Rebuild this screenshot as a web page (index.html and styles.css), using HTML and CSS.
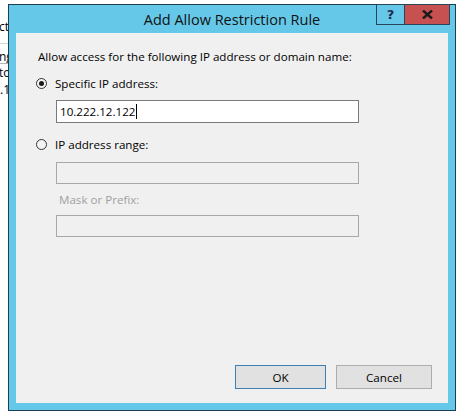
FILE: index.html
```html
<!DOCTYPE html>
<html>
<head>
<meta charset="utf-8">
<link rel="stylesheet" href="styles.css">
</head>
<body>
<div class="desktop">
  <div class="backdrop-left">
    <div class="bg-row bg-ct">ct</div>
    <div class="bg-row bg-ng">ng</div>
    <div class="bg-row bg-to">to</div>
    <div class="bg-row bg-dot">.1</div>
  </div>
  <div class="backdrop-right">
    <div class="bg-row bg-ric">ric</div>
  </div>

  <div class="dialog">
    <div class="titlebar">
      <span class="title">Add Allow Restriction Rule</span>
    </div>
    <div class="caption-buttons">
      <span class="cap-btn help">?</span>
      <span class="cap-btn close">
        <svg width="11" height="9" viewBox="0 0 11 9"><path d="M1 0.5 L10 8.5 M10 0.5 L1 8.5" stroke="#1b1b1b" stroke-width="2.4"/></svg>
      </span>
    </div>
    <div class="client">
      <div class="prompt">Allow access for the following IP address or domain name:</div>
      <label class="radio-row first">
        <span class="radio checked"></span>
        <span class="radio-label">Specific IP address:</span>
      </label>
      <div class="textbox"><span class="value">10.222.12.122</span><span class="caret"></span></div>
      <label class="radio-row second">
        <span class="radio"></span>
        <span class="radio-label">IP address range:</span>
      </label>
      <div class="textbox disabled"></div>
      <div class="sub-label">Mask or Prefix:</div>
      <div class="textbox disabled"></div>
      <div class="buttons">
        <span class="btn default">OK</span>
        <span class="btn cancel">Cancel</span>
      </div>
    </div>
  </div>
</div>
</body>
</html>
```

FILE: styles.css
```css
html, body {
  margin: 0;
  padding: 0;
  background: #ffffff;
}

body {
  font-family: "Open Sans", "Noto Sans", "DejaVu Sans", sans-serif;
  font-size: 11.6px;
  color: #000;
}

.desktop {
  position: relative;
  width: 465px;
  height: 420px;
  overflow: hidden;
}

.backdrop-left {
  position: absolute;
  left: 0;
  top: 0;
  width: 9px;
}

.backdrop-right {
  position: absolute;
  left: 456px;
  top: 0;
  width: 9px;
  overflow: hidden;
}

.bg-row {
  position: absolute;
  left: 0;
  font-size: 12px;
  line-height: 14px;
  white-space: nowrap;
  color: #000;
}

.bg-ct { top: 20px; left: -1px; }
.bg-ng { top: 50px; left: -1px; }
.bg-to { top: 66px; left: -1px; }
.bg-dot { top: 83px; left: 0; }
.bg-ric { top: 23px; left: 1px; font-size: 11px; }

.backdrop-left::before {
  content: "";
  position: absolute;
  left: 0;
  top: 43px;
  width: 9px;
  border-top: 1px solid #d6d6d6;
}
.backdrop-left::after {
  content: "";
  position: absolute;
  left: 0;
  top: 63px;
  width: 9px;
  border-top: 1px solid #b4b4b4;
}
.backdrop-right::before {
  content: "";
  position: absolute;
  left: 0;
  top: 44px;
  width: 9px;
  border-top: 1px solid #dcdcdc;
}
.backdrop-right::after {
  content: "";
  position: absolute;
  left: 0;
  top: 86px;
  width: 9px;
  border-top: 1px solid #dcdcdc;
}

.dialog {
  position: absolute;
  left: 8px;
  top: 4px;
  width: 432px;
  border: 1px solid #1e3f52;
  background: #66c8e8;
  padding: 0 7px 7px 7px;
}

.titlebar {
  height: 28px;
  display: flex;
  align-items: center;
  justify-content: center;
}

.title {
  font-size: 14.5px;
  color: #111;
  padding-top: 1px;
}

.caption-buttons {
  position: absolute;
  top: -1px;
  right: 5px;
  display: flex;
}

.cap-btn {
  box-sizing: border-box;
  height: 21px;
  display: flex;
  align-items: center;
  justify-content: center;
  border: 1px solid #2a4656;
}

.help {
  width: 29px;
  font-weight: bold;
  font-size: 13px;
  color: #1c2b4d;
  font-family: "DejaVu Sans", sans-serif;
}

.close {
  width: 46px;
  margin-left: -1px;
  background: #c75050;
}

.client {
  box-sizing: border-box;
  height: 370px;
  background: #f0f0f0;
  padding: 16px 16px 14px 22px;
  display: flex;
  flex-direction: column;
}

.prompt {
  line-height: 16px;
  height: 16px;
}

.radio-row {
  display: flex;
  align-items: center;
  margin-left: -2px;
  height: 16px;
}

.radio-row.first {
  margin-top: 10px;
}

.radio-row.second {
  margin-top: 13px;
}

.radio {
  box-sizing: border-box;
  width: 11px;
  height: 11px;
  border: 1px solid #333;
  border-radius: 50%;
  background: #f4f4f4;
  display: flex;
  align-items: center;
  justify-content: center;
  margin-right: 8px;
}

.radio.checked::after {
  content: "";
  width: 5px;
  height: 5px;
  border-radius: 50%;
  background: #1a1a1a;
}

.textbox {
  box-sizing: border-box;
  width: 303px;
  height: 23px;
  margin-left: 18px;
  border: 1px solid #7a7a7a;
  background: #fff;
  display: flex;
  align-items: center;
  padding-left: 3px;
}

.radio-row.first + .textbox {
  margin-top: 9px;
}

.textbox.disabled {
  background: #f0f0f0;
  border-color: #a8a8a8;
  height: 22px;
}

.radio-row.second + .textbox {
  margin-top: 10px;
}

.value {
  line-height: 16px;
}

.caret {
  width: 1px;
  height: 15px;
  background: #000;
  margin-left: 1px;
}

.sub-label {
  color: #a0a0a0;
  margin-left: 21px;
  margin-top: 8px;
  line-height: 16px;
  height: 16px;
}

.sub-label + .textbox {
  margin-top: 7px;
}

.buttons {
  margin-top: auto;
  display: flex;
  justify-content: flex-end;
  gap: 10px;
  margin-right: 0;
}

.btn {
  box-sizing: border-box;
  height: 24px;
  display: flex;
  align-items: center;
  justify-content: center;
  background: #e1e1e1;
  border: 1px solid #adadad;
}

.btn.default {
  width: 91px;
  border-color: #3f7fb3;
}

.btn.cancel {
  width: 96px;
}
```
